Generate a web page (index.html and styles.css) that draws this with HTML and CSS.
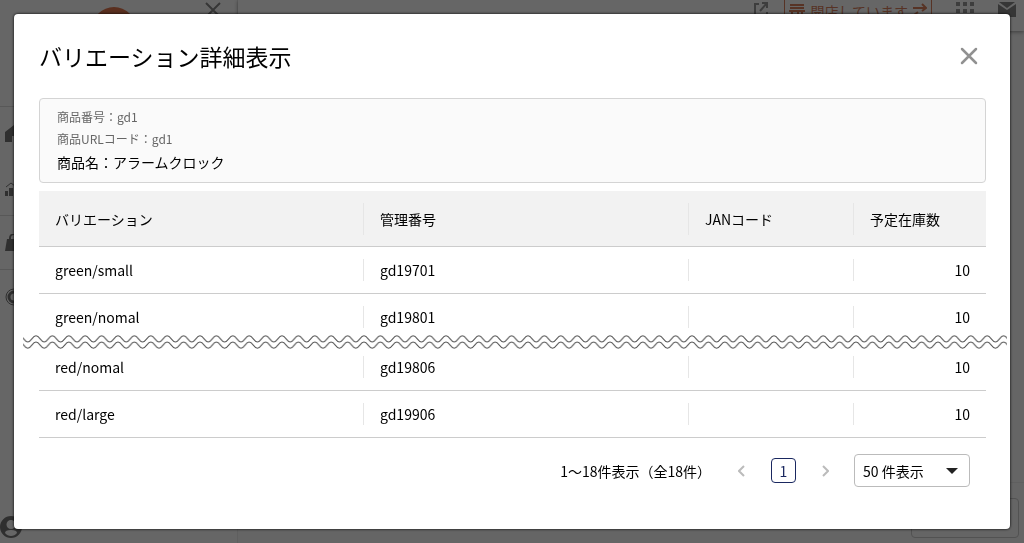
FILE: index.html
```html
<!DOCTYPE html>
<html lang="ja">
 <head>
  <meta charset="utf-8" />
  <title>バリエーション詳細表示</title>
  <link rel="stylesheet" href="styles.css">
 </head>
 <body>
  <div class="page">
   <aside class="sidebar">
    <div class="brand">
     <svg class="logo" width="44" height="44" viewBox="0 0 44 44"><circle cx="22" cy="22" r="22" fill="#e0764e" /><path d="M7 20a16 16 0 0 1 30 0z" fill="#222" /></svg>
     <svg class="fold" width="16" height="16" viewBox="0 0 16 16"><path d="M1 1l14 14M15 1L1 15" stroke="#888" stroke-width="2" fill="none" /></svg>
    </div>
    <ul class="nav">
     <li><svg width="18" height="18" viewBox="0 0 18 18"><path d="M0 7l9-7 9 7v10h-7v-6H7v6H0z" /></svg></li>
     <li><svg width="18" height="18" viewBox="0 0 18 18"><path d="M0 12h3v5H0zM4 9h4v8H4zM9 11h3v6H9zM13 6h3v11h-3z" /><path d="M1 8l5-4 4 3 6-6" fill="none" stroke="#777" /></svg></li>
     <li class="line"><svg width="18" height="18" viewBox="0 0 18 18"><path d="M2 5h14l2 12H0z" /><path d="M5 7V4a4 4 0 0 1 8 0v3" fill="none" stroke="#777" stroke-width="2" /></svg></li>
     <li class="line"><svg width="18" height="18" viewBox="0 0 18 18"><circle cx="9" cy="9" r="8" fill="none" stroke="#777" /><circle cx="9" cy="9" r="5" fill="none" stroke="#777" stroke-width="3" /></svg></li>
    </ul>
    <div class="account">
     <svg width="22" height="22" viewBox="0 0 22 22"><path fill-rule="evenodd" d="M11 0a11 11 0 1 0 0 22a11 11 0 0 0 0-22zM11 4a4 4 0 1 1 0 9a4 4 0 0 1 0-9zM11 14c4 0 6 1 6 3c-3 4-9 4-12 0c0-2 2-3 6-3z" /></svg>
    </div>
   </aside>
   <main class="main">
    <header class="topbar">
     <svg width="16" height="16" viewBox="0 0 16 16"><path d="M6 2H2v12h12v-4M9 1h5v5M14 1L7 9" fill="none" stroke="#999" stroke-width="2" /></svg>
     <button class="status" type="button">
      <svg width="16" height="16" viewBox="0 0 16 16"><path d="M1 2h14M1 5h14M0 8h16M3 8v7h6V8M13 8v7" fill="none" stroke="#d9805c" stroke-width="2" /></svg>
      開店しています
      <svg width="14" height="16" viewBox="0 0 14 16"><path d="M0 5h13M9 1l4 4-4 3M14 12H1M5 9l-4 3 4 3" fill="none" stroke="#d9805c" stroke-width="2" /></svg>
     </button>
     <svg class="apps" width="18" height="18" viewBox="0 0 18 18"><path d="M0 0h4v4H0zM7 0h4v4H7zM14 0h4v4h-4zM0 7h4v4H0zM7 7h4v4H7zM14 7h4v4h-4zM0 14h4v4H0zM7 14h4v4H7zM14 14h4v4h-4z" /></svg>
     <svg class="mail" width="18" height="15" viewBox="0 0 18 15"><path d="M1 0h16l-8 6zM0 2l9 6 9-6v13H0z" /></svg>
    </header>
    <footer class="bottombar"><div class="ghost"></div></footer>
   </main>
  </div>

  <div class="overlay">
   <div class="modal" role="dialog" aria-labelledby="modal-title">
    <div class="modal-head">
     <h1 id="modal-title">バリエーション詳細表示</h1>
     <button class="close" type="button" aria-label="閉じる">
      <svg width="18" height="18" viewBox="0 0 18 18"><path d="M2 2l14 14M16 2L2 16" fill="none" stroke="#919191" stroke-width="2.5" stroke-linecap="round" /></svg>
     </button>
    </div>

    <div class="item">
     <p>商品番号：gd1</p>
     <p>商品URLコード：gd1</p>
     <p class="item-name">商品名：アラームクロック</p>
    </div>

    <table class="list">
     <colgroup><col /><col /><col class="col-jan" /><col class="col-stock" /></colgroup>
     <thead>
      <tr><th>バリエーション</th><th>管理番号</th><th>JANコード</th><th>予定在庫数</th></tr>
     </thead>
     <tbody>
      <tr><td>green/small</td><td>gd19701</td><td></td><td class="num">10</td></tr>
      <tr class="last"><td>green/nomal</td><td>gd19801</td><td></td><td class="num">10</td></tr>
     </tbody>
     <tbody>
      <tr class="cut">
       <td colspan="4">
        <!-- omitted rows -->
        <svg class="wave" height="16">
         <defs>
          <pattern id="wave" width="16.4" height="16" patternUnits="userSpaceOnUse" patternTransform="translate(13 0)">
           <path d="M-8.2 1.8h33V14h-33z" fill="none" />
           <path d="M-8.2 8C-4.5 8-3.7 1.8 0 1.8S4.5 8 8.2 8S12.7 1.8 16.4 1.8S20.9 8 24.6 8M-8.2 14.2C-4.5 14.2-3.7 8 0 8S4.5 14.2 8.2 14.2S12.7 8 16.4 8S20.9 14.2 24.6 14.2" fill="none" stroke="#555" />
          </pattern>
         </defs>
         <rect width="100%" height="16" fill="url(#wave)" />
        </svg>
       </td>
      </tr>
     </tbody>
     <tbody>
      <tr><td>red/nomal</td><td>gd19806</td><td></td><td class="num">10</td></tr>
      <tr><td>red/large</td><td>gd19906</td><td></td><td class="num">10</td></tr>
     </tbody>
    </table>

    <div class="pager">
     <span class="count">1〜18件表示（全18件）</span>
     <div class="pages">
      <button type="button" aria-label="前へ"><svg width="8" height="12" viewBox="0 0 8 12"><path d="M6 1L1 6l5 5" fill="none" stroke="#bbb" stroke-width="2" /></svg></button>
      <button type="button" class="current">1</button>
      <button type="button" aria-label="次へ"><svg width="8" height="12" viewBox="0 0 8 12"><path d="M2 1l5 5-5 5" fill="none" stroke="#bbb" stroke-width="2" /></svg></button>
     </div>
     <div class="select">
      <select aria-label="表示件数"><option>50 件表示</option></select>
      <svg width="12" height="6" viewBox="0 0 12 6"><path d="M0 0h12L6 6z" fill="#222" /></svg>
     </div>
    </div>
   </div>
  </div>
 </body>
</html>
```
FILE: styles.css
```css
* { margin: 0; padding: 0; box-sizing: border-box; }
body {
  color: #000;
  font-family: "Noto Sans CJK JP", sans-serif;
  font-size: 14px;
  line-height: 20px;
  background-color: #fff;
  overflow: hidden;
}
h1 {
  font-size: 23px;
  font-weight: normal;
  line-height: 32px;
}
button, select {
  font: inherit;
  color: inherit;
  background: none;
  border: none;
}
svg {
  display: block;
}

/* page behind the dialog */
.page {
  display: flex;
  height: 100vh;
}
.sidebar {
  display: flex;
  flex-direction: column;
  width: 238px;
  border-right: 1px solid #eee;
  fill: #777;
}
.brand {
  display: flex;
  justify-content: flex-end;
  gap: 69px;
  height: 107px;
  padding: 2px 16px 0 0;
  border-bottom: 1px solid #ddd;
}
.logo {
  margin-top: 5px;
}
.nav {
  flex: 1;
  list-style: none;
}
.nav li {
  height: 54px;
  padding: 18px 5px;
}
.nav .line {
  border-top: 1px solid #ddd;
}
.account {
  height: 27px;
}
.main {
  display: flex;
  flex: 1;
  flex-direction: column;
  justify-content: space-between;
  background-color: #fcfcfc;
}
.topbar {
  display: flex;
  justify-content: flex-end;
  align-items: flex-start;
  height: 31px;
  padding: 2px 8px 0 0;
  background-color: #fff;
  box-shadow: 0 1px 4px #999;
}
.status {
  display: flex;
  align-items: center;
  gap: 5px;
  height: 28px;
  margin: -5px 24px 0 15px;
  padding: 0 4px;
  color: #d9805c;
  border: 1px solid #d9805c;
}
.apps {
  margin-right: 24px;
  fill: #999;
}
.mail {
  fill: #888;
}
.bottombar {
  height: 61px;
  padding: 15px 5px;
  border-top: 1px solid #eee;
}
.ghost {
  width: 108px;
  height: 40px;
  margin-left: auto;
  border: 1px solid #ccc;
  border-radius: 4px;
}

/* dialog */
.overlay {
  position: fixed;
  inset: 0;
  padding: 14px;
  background-color: rgba(0, 0, 0, .6);
}
.modal {
  height: 100%;
  padding: 26px 24px 0 25px;
  background-color: #fff;
  border-radius: 4px;
  box-shadow: 0 0 3px #000;
}
.modal-head {
  display: flex;
  justify-content: space-between;
  align-items: center;
  padding-right: 8px;
}
.item {
  margin-top: 26px;
  padding: 7px 17px 8px;
  font-size: 12px;
  line-height: 22px;
  color: #666;
  background-color: #fafafa;
  border: 1px solid #d4d4d4;
  border-radius: 4px;
}
.item-name {
  font-size: 14px;
  line-height: 24px;
  color: #000;
}
.list {
  width: 100%;
  margin-top: 8px;
  table-layout: fixed;
  border-collapse: separate;
  border-spacing: 0;
}
.col-jan { width: 165px; }
.col-stock { width: 132px; }
.list th, .list td {
  height: 47px;
  padding: 0 16px;
  font-weight: normal;
  text-align: left;
  border-bottom: 1px solid #ccc;
  background: linear-gradient(#e6e6e6, #e6e6e6) right / 1px 22px no-repeat;
}
.list th {
  height: 56px;
  background-color: #f2f2f2;
  background-size: 1px 32px;
}
.list th:last-child, .list td:last-child {
  background-image: none;
}
.list .num {
  text-align: right;
}
.list .last td {
  border-bottom-color: transparent;
}
.list .cut td {
  position: relative;
  height: 3px;
  padding: 0;
  border: none;
}
.wave {
  position: absolute;
  top: -7px;
  left: -16px;
  width: calc(100% + 37px);
}
.pager {
  display: flex;
  justify-content: flex-end;
  align-items: center;
  margin-top: 16px;
  padding-right: 16px;
}
.pages {
  display: flex;
  align-items: center;
  gap: 25px;
  margin: 0 25px 0 27px;
}
.pages .current {
  width: 25px;
  height: 25px;
  color: #1a2860;
  border: 1px solid #1a2860;
  border-radius: 4px;
}
.select {
  position: relative;
  width: 116px;
}
.select select {
  width: 100%;
  height: 33px;
  padding: 0 8px;
  border: 1px solid #bbb;
  border-radius: 4px;
  appearance: none;
}
.select svg {
  position: absolute;
  top: 14px;
  right: 12px;
  pointer-events: none;
}
```
